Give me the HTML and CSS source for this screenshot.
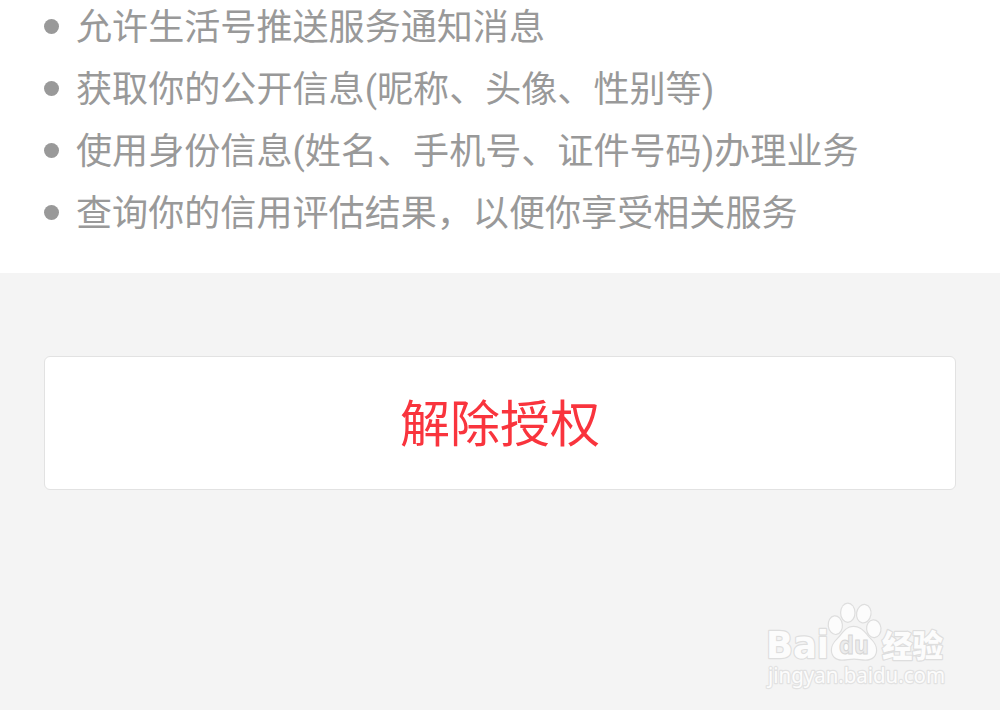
FILE: index.html
```html
<!DOCTYPE html>
<html lang="zh-CN">
<head>
<meta charset="utf-8">
<title>解除授权</title>
<link rel="stylesheet" href="styles.css">
</head>
<body>
<main class="page">
  <section class="permissions">
    <ul class="permission-list">
      <li class="permission">允许生活号推送服务通知消息</li>
      <li class="permission">获取你的公开信息(昵称、头像、性别等)</li>
      <li class="permission">使用身份信息(姓名、手机号、证件号码)办理业务</li>
      <li class="permission">查询你的信用评估结果，以便你享受相关服务</li>
    </ul>
  </section>
  <section class="actions">
    <button class="revoke" type="button">解除授权</button>
  </section>
  <svg class="watermark" width="210" height="110" viewBox="0 0 210 110" aria-label="Baidu 经验">
    <g class="mark">
      <text class="brand" x="16" y="68" textLength="63" lengthAdjust="spacingAndGlyphs">Bai</text>
      <ellipse cx="85.3" cy="35.2" rx="6.5" ry="8.7" transform="rotate(-6 85.3 35.2)"/>
      <ellipse cx="97.8" cy="22.7" rx="6.6" ry="9"/>
      <ellipse cx="113.8" cy="23.7" rx="6.6" ry="8.7" transform="rotate(10 113.8 23.7)"/>
      <ellipse cx="123.8" cy="38.7" rx="6.6" ry="8.3" transform="rotate(-5 123.8 38.7)"/>
      <path d="M103.500 37C97 37 93.500 42 90.500 46C87 50.500 82 53 82 60C82 66 86 69.500 92 69.500C96.500 69.500 99.500 68.500 104 68.500C108.500 68.500 111 69.500 115.500 69.500C122 69.500 126 66 126 60C126 53 121 50.500 117.500 46C114 41.500 110 37 103.500 37Z"/>
      <text class="cjk" x="132" y="67" textLength="61" lengthAdjust="spacingAndGlyphs">经验</text>
      <text class="site" x="18" y="92.500" textLength="177" lengthAdjust="spacingAndGlyphs">jingyan.baidu.com</text>
    </g>
    <text class="du" x="89" y="64" textLength="30" lengthAdjust="spacingAndGlyphs">du</text>
  </svg>
</main>
</body>
</html>
```
FILE: styles.css
```css
* {
  box-sizing: border-box;
}

body {
  margin: 0;
  background: #f4f4f4;
  font-family: Roboto, "Noto Sans CJK SC", sans-serif;
}

.page {
  position: relative;
  height: 710px;
  overflow: hidden;
}

.permissions {
  display: flex;
  flex-direction: column;
  justify-content: flex-end;
  height: 273px;
  padding-bottom: 28px;
  background: #fff;
}

.permission-list {
  margin: 0;
  padding: 0 44px;
  list-style: none;
}

.permission {
  display: flex;
  align-items: center;
  gap: 17px;
  height: 62px;
  color: #999;
  font-size: 36.1px;
  line-height: 62px;
  white-space: nowrap;
}

.permission::before {
  content: "";
  width: 15px;
  height: 15px;
  margin-bottom: 3.5px;
  border-radius: 50%;
  background: #999;
}

.actions {
  padding: 83px 44px 0;
}

.revoke {
  display: block;
  width: 100%;
  height: 134px;
  padding: 4px 0 0;
  border: 1px solid #e2e2e2;
  border-radius: 6px;
  background: #fff;
  color: #f9343d;
  font: 50px/60px Roboto, "Noto Sans CJK SC", sans-serif;
}

.watermark {
  position: absolute;
  left: 750px;
  top: 590px;
}

.mark {
  fill: #fcfcfc;
  stroke: #dedede;
  stroke-width: 2.4px;
  stroke-linejoin: round;
  paint-order: stroke;
}

.brand {
  font: bold 37px "DejaVu Sans", sans-serif;
}

.cjk {
  font: 900 31px "Noto Sans CJK SC", sans-serif;
}

.site {
  stroke: #e2e2e2;
  font: 21px "Noto Sans", sans-serif;
}

.du {
  fill: #ececec;
  stroke: #d6d6d6;
  stroke-width: 1px;
  font: bold 24px "DejaVu Sans", sans-serif;
}
```
